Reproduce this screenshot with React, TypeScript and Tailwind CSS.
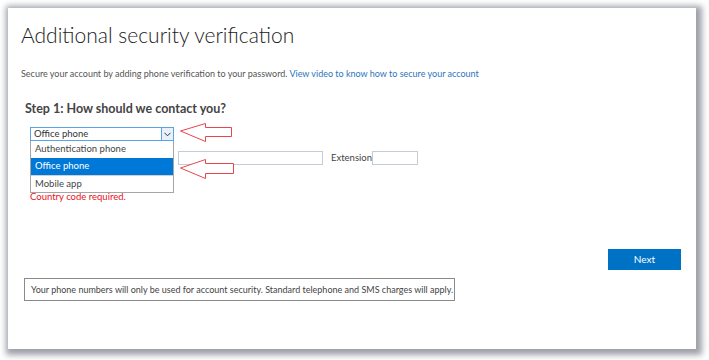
// Additional security verification — step 1 with the contact dropdown open.

const FONT = "font-['Lato','Open_Sans',sans-serif]";

function LeftArrow({ className, w, h, d }: { className: string; w: number; h: number; d: string }) {
  return (
    <svg
      className={`pointer-events-none absolute ${className}`}
      width={w}
      height={h}
      viewBox={`0 0 ${w} ${h}`}
      aria-hidden="true"
    >
      <path d={d} fill="white" stroke="#e8464f" strokeWidth="1" strokeLinejoin="miter" />
    </svg>
  );
}

export default function App() {
  return (
    <div className={`h-[360px] w-[709px] overflow-hidden bg-white pl-2 pt-2 ${FONT}`}>
      <div className="relative flex h-[341px] w-[688px] flex-col bg-white shadow-[2px_2px_6px_4px_rgba(125,130,140,0.75)]">
        <h1 className="pl-[13px] pt-[14px] text-[21px] font-light leading-[26px] text-[#222]">
          Additional security verification
        </h1>

        <p className="mt-[20px] pl-[13px] text-[9px] leading-[12px] text-[#555]">
          Secure your account by adding phone verification to your password.{" "}
          <a href="#" className="text-[#2b74c0]">
            View video to know how to secure your account
          </a>
        </p>

        <h2 className="mt-[21px] pl-[17px] text-[12.5px] font-bold leading-[16px] text-[#444]">
          Step 1: How should we contact you?
        </h2>

        {/* contact method select, opened */}
        <div className="relative z-10 ml-[22px] mt-[10px] w-[144px]">
          <div className="flex h-[14px] w-[144px] items-center border border-[#5aa4e6] bg-white">
            <span className="flex-1 pl-[3px] text-[9.5px] leading-[12px] text-[#333]">Office phone</span>
            <span className="flex h-[12px] w-[12px] items-center justify-center border-l border-[#5aa4e6] bg-[#e8f1fb]">
              <svg width="7" height="5" viewBox="0 0 7 5" aria-hidden="true">
                <path d="M0.5 0.8 L3.5 3.8 L6.5 0.8" fill="none" stroke="#333" strokeWidth="1" />
              </svg>
            </span>
          </div>
          <ul className="absolute left-0 top-[14px] w-[144px] border border-t-0 border-[#a6a6a6] bg-white text-[9.5px] text-[#444]">
            <li className="flex h-[17px] items-center pl-[4px]">Authentication phone</li>
            <li className="flex h-[17px] items-center bg-[#0078d7] pl-[4px] text-white">Office phone</li>
            <li className="flex h-[17px] items-center border-t border-[#d0d0d0] pl-[4px]">Mobile app</li>
          </ul>
        </div>

        <div className="ml-[22px] mt-[10px] flex items-center">
          <div className="h-[14px] w-[144px]" />
          <div className="ml-[4px] h-[14px] w-[145px] border border-[#c5ccd4] bg-white" />
          <span className="ml-[8px] text-[9.5px] leading-[12px] text-[#444]">Extension</span>
          <div className="h-[14px] w-[46px] border border-[#c5ccd4] bg-white" />
        </div>

        <p className="ml-[22px] mt-[26px] text-[9.5px] leading-[12px] text-[#e81123]">Country code required.</p>

        <div className="mr-[15px] mt-[46px] flex justify-end">
          <button className="h-[21px] w-[73px] bg-[#0072c6] text-[10px] text-white">Next</button>
        </div>

        <div className="ml-[16px] mt-[8px] flex h-[23px] w-[431px] items-center whitespace-nowrap border border-[#8a8a8a] px-[6px] text-[9px] text-[#444]">
          Your phone numbers will only be used for account security. Standard telephone and SMS charges will apply.
        </div>

        <LeftArrow
          className="left-[170px] top-[113px]"
          w={56}
          h={22}
          d="M2.5 10 L27.5 2.5 L27.5 6.5 L53.5 6.5 L53.5 15.5 L27.5 15.5 L27.5 20.5 Z"
        />
        <LeftArrow
          className="left-[170px] top-[149px]"
          w={58}
          h={24}
          d="M2.5 11 L27.5 2.5 L27.5 6.5 L55.5 6.5 L55.5 16.5 L27.5 16.5 L27.5 21.5 Z"
        />
      </div>
    </div>
  );
}
